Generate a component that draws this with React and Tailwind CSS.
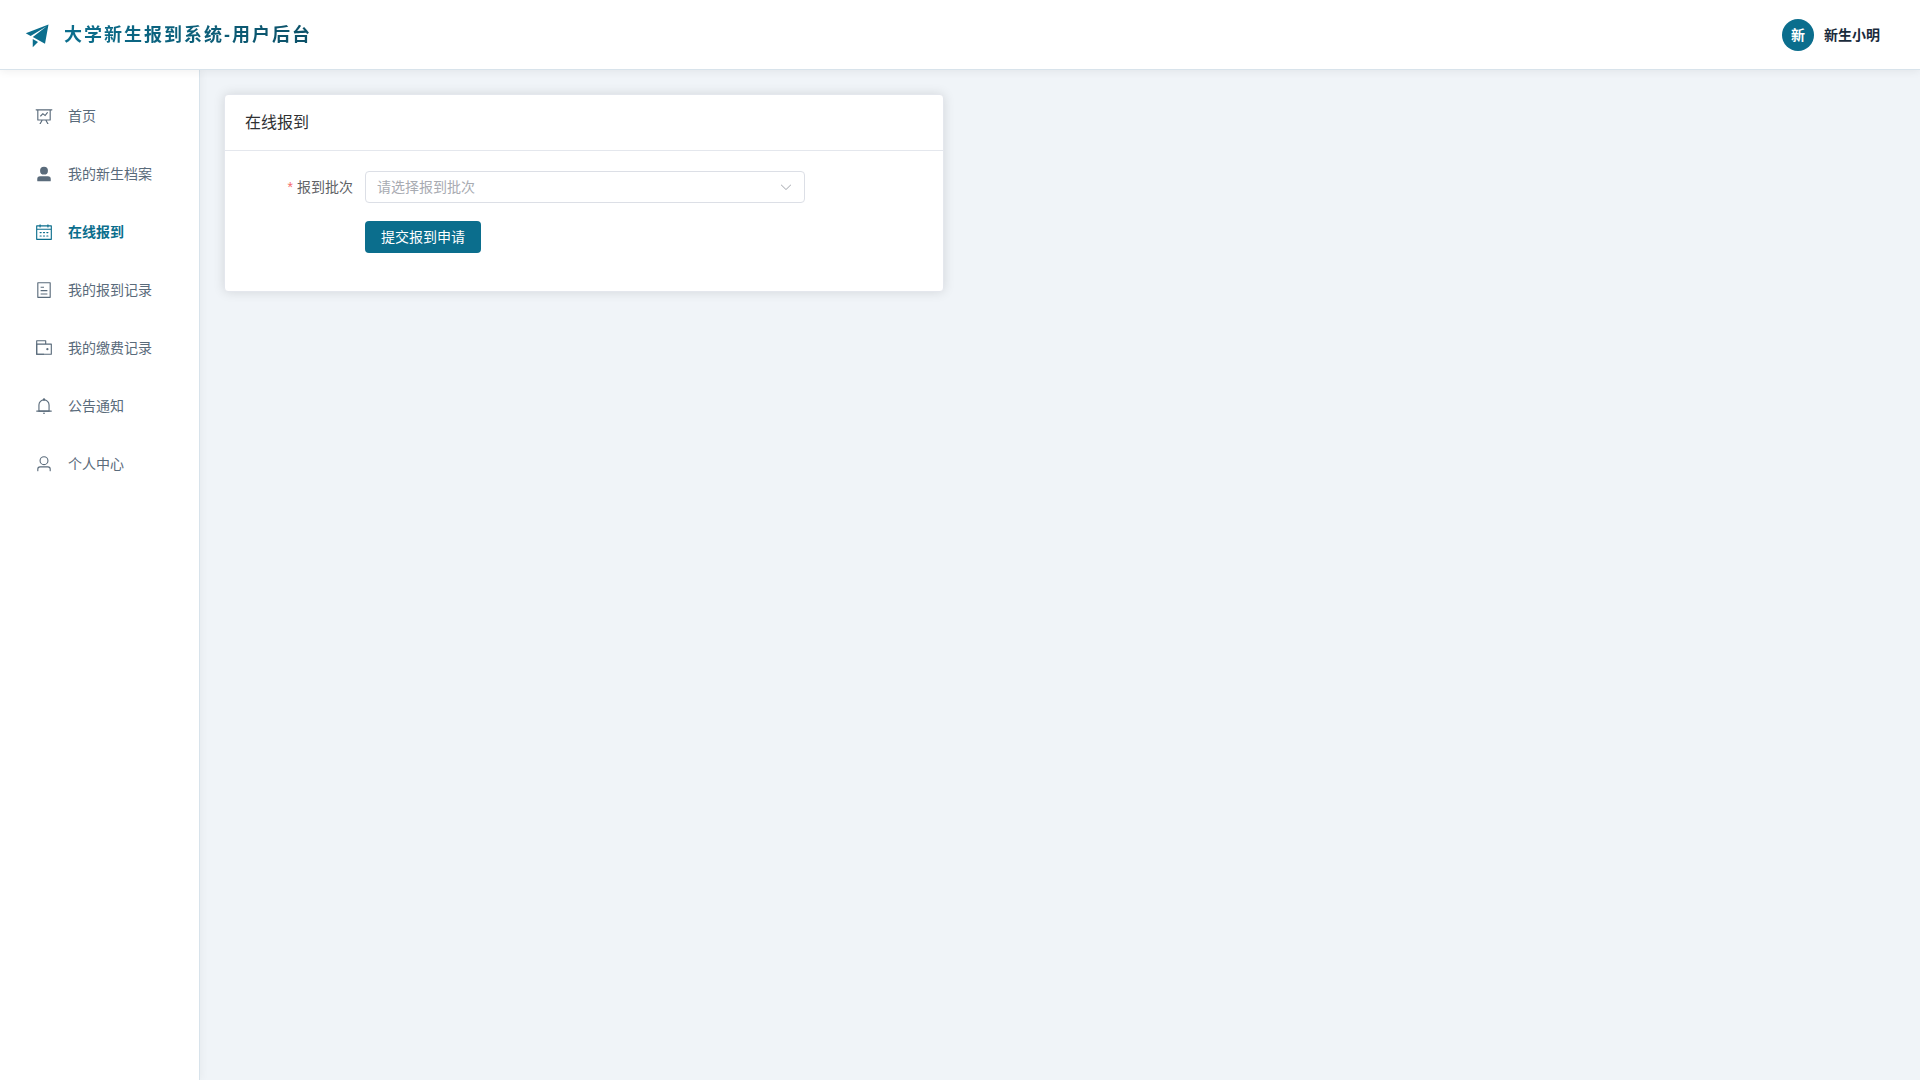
import React, { useState } from "react";

const icons = {
  board: ["M359.168 768H160a32 32 0 0 1-32-32V192H64a32 32 0 0 1 0-64h896a32 32 0 1 1 0 64h-64v544a32 32 0 0 1-32 32H665.216l110.848 192h-73.856L591.36 768H433.024L322.176 960H248.32zM832 192H192v512h640zM342.656 534.656a32 32 0 1 1-45.312-45.312L444.992 341.76l125.44 94.08L679.04 300.032a32 32 0 1 1 49.92 39.936L581.632 524.224 451.008 426.24 342.656 534.592z"],
  userSolid: ["M288 320a224 224 0 1 0 448 0 224 224 0 1 0-448 0m544 608H160a32 32 0 0 1-32-32v-96a160 160 0 0 1 160-160h448a160 160 0 0 1 160 160v96a32 32 0 0 1-32 32z"],
  date: ["M128 384v512h768V192H768v32a32 32 0 1 1-64 0v-32H320v32a32 32 0 0 1-64 0v-32H128v128h768v64zm192-256h384V96a32 32 0 1 1 64 0v32h160a32 32 0 0 1 32 32v768a32 32 0 0 1-32 32H96a32 32 0 0 1-32-32V160a32 32 0 0 1 32-32h160V96a32 32 0 0 1 64 0zm-32 384h64a32 32 0 0 1 0 64h-64a32 32 0 0 1 0-64m0 192h64a32 32 0 1 1 0 64h-64a32 32 0 1 1 0-64m192-192h64a32 32 0 0 1 0 64h-64a32 32 0 0 1 0-64m0 192h64a32 32 0 1 1 0 64h-64a32 32 0 1 1 0-64m192-192h64a32 32 0 1 1 0 64h-64a32 32 0 1 1 0-64m0 192h64a32 32 0 1 1 0 64h-64a32 32 0 1 1 0-64"],
  record: ["M192 128v768h640V128zm-32-64h704a32 32 0 0 1 32 32v832a32 32 0 0 1-32 32H160a32 32 0 0 1-32-32V96a32 32 0 0 1 32-32m160 448h384v64H320zm0-192h192v64H320zm0 384h384v64H320z"],
  wallet: [
    "M640 288h-64V128H128v704h384v32a32 32 0 0 0 32 32H96a32 32 0 0 1-32-32V96a32 32 0 0 1 32-32h512a32 32 0 0 1 32 32z",
    "M128 320v512h768V320zm-32-64h832a32 32 0 0 1 32 32v576a32 32 0 0 1-32 32H96a32 32 0 0 1-32-32V288a32 32 0 0 1 32-32",
    "M704 640a64 64 0 1 1 0-128 64 64 0 0 1 0 128",
  ],
  bell: [
    "M512 64a64 64 0 0 1 64 64v64H448v-64a64 64 0 0 1 64-64",
    "M256 768h512V448a256 256 0 1 0-512 0zm256-640a320 320 0 0 1 320 320v384H192V448a320 320 0 0 1 320-320",
    "M96 768h832q32 0 32 32t-32 32H96q-32 0-32-32t32-32m352 128h128a64 64 0 0 1-128 0",
  ],
  user: ["M512 512a192 192 0 1 0 0-384 192 192 0 0 0 0 384m0 64a256 256 0 1 1 0-512 256 256 0 0 1 0 512m320 320v-96a96 96 0 0 0-96-96H288a96 96 0 0 0-96 96v96a32 32 0 1 1-64 0v-96a160 160 0 0 1 160-160h448a160 160 0 0 1 160 160v96a32 32 0 1 1-64 0"],
  promotion: ["m64 448 832-320-128 704-446.08-243.328L832 192 242.816 545.536zm256 512V657.024L512 768z"],
  arrowDown: ["M831.872 340.864 512 652.672 192.128 340.864a30.59 30.59 0 0 0-42.752 0 29.12 29.12 0 0 0 0 41.6L489.664 714.24a32 32 0 0 0 44.672 0l340.288-331.712a29.12 29.12 0 0 0 0-41.728 30.59 30.59 0 0 0-42.752 0z"],
};

const menu = [
  { icon: "board", label: "首页" },
  { icon: "userSolid", label: "我的新生档案" },
  { icon: "date", label: "在线报到" },
  { icon: "record", label: "我的报到记录" },
  { icon: "wallet", label: "我的缴费记录" },
  { icon: "bell", label: "公告通知" },
  { icon: "user", label: "个人中心" },
];

const Icon = ({ name, className }) => (
  <svg viewBox="0 0 1024 1024" className={className} fill="currentColor" aria-hidden="true">
    {icons[name].map((d) => <path key={d} d={d} />)}
  </svg>
);

const App = () => {
  const [active, setActive] = useState("在线报到");
  const [batch, setBatch] = useState("");

  return (
    <div className="min-h-screen flex flex-col bg-[#f0f4f8] text-sm font-['Liberation_Sans','Noto_Sans_CJK_SC',sans-serif]">
      {/* Header */}
      <header className="relative z-10 h-[70px] px-6 flex items-center justify-between bg-white border-b border-[#d8e3eb] shadow-[0_2px_8px_rgba(0,0,0,0.06)]">
        <div className="flex items-center gap-3">
          <Icon name="promotion" className="w-7 h-7 text-[#0b6e8d]" />
          <h1 className="text-lg font-bold tracking-[2px] bg-linear-to-r from-[#0b6e8d] to-[#0c5168] bg-clip-text text-transparent">
            大学新生报到系统-用户后台
          </h1>
        </div>
        <button type="button" className="flex items-center gap-[10px] px-4">
          <span className="w-8 h-8 rounded-full bg-[#0b6e8d] text-white font-bold flex items-center justify-center">新</span>
          <span className="font-bold text-[#1a2b3c]">新生小明</span>
        </button>
      </header>

      <div className="flex flex-1">
        {/* Sidebar */}
        <aside className="w-[200px] shrink-0 bg-white border-r border-[#d8e3eb] shadow-[2px_0_8px_rgba(0,0,0,0.04)]">
          <nav className="pt-[21px] flex flex-col gap-2">
            {menu.map((m) => (
              <a
                key={m.label}
                href="#"
                onClick={(e) => { e.preventDefault(); setActive(m.label); }}
                className={
                  active === m.label
                    ? "h-[50px] pl-[35px] flex items-center gap-[15px] font-bold text-[#0b6e8d]"
                    : "h-[50px] pl-[35px] flex items-center gap-[15px] text-[#5a6b7b]"
                }
              >
                <Icon name={m.icon} className="w-[18px] h-[18px] shrink-0" />
                <span>{m.label}</span>
              </a>
            ))}
          </nav>
        </aside>

        {/* Content */}
        <main className="flex-1 p-6">
          <section className="max-w-[720px] bg-white border border-[#e4e7ed] rounded shadow-[0_0_12px_rgba(0,0,0,0.12)]">
            <h2 className="px-5 py-[18px] text-base leading-[19px] text-[#303133] border-b border-[#e4e7ed]">在线报到</h2>
            <form className="p-5 max-w-[600px]" onSubmit={(e) => e.preventDefault()}>
              <div className="flex items-center mb-[18px]">
                <label htmlFor="batch" className="w-[120px] pr-3 text-right text-[#606266]">
                  <span className="text-[#f56c6c] mr-1">*</span>报到批次
                </label>
                <div className="relative flex-1">
                  <select
                    id="batch"
                    value={batch}
                    onChange={(e) => setBatch(e.target.value)}
                    className="w-full h-8 pl-[11px] pr-8 appearance-none bg-white border border-[#dcdfe6] rounded text-[#a8abb2] focus:outline-none focus:border-[#0b6e8d]"
                  >
                    <option value="">请选择报到批次</option>
                  </select>
                  <Icon name="arrowDown" className="absolute right-3 top-[9px] w-[14px] h-[14px] text-[#a8abb2] pointer-events-none" />
                </div>
              </div>
              <div className="pl-[120px] mb-[18px] flex">
                <button type="submit" className="h-8 px-4 rounded bg-[#0b6e8d] hover:bg-[#0a5f7a] text-white">提交报到申请</button>
              </div>
            </form>
          </section>
        </main>
      </div>
    </div>
  );
};

export default App;
